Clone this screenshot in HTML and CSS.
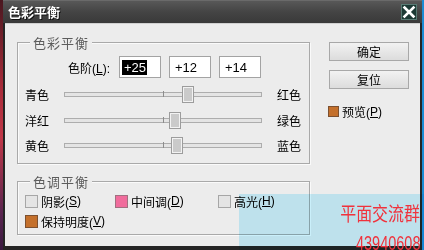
FILE: index.html
```html
<!DOCTYPE html>
<html lang="zh-CN">
<head>
<meta charset="utf-8">
<title>色彩平衡</title>
<link rel="stylesheet" href="styles.css">
</head>
<body>
<div class="window">
  <div class="titlebar">
    <span class="title">色彩平衡</span>
    <span class="close"><svg width="14" height="14" viewBox="0 0 14 14"><path d="M2.5 2.5 L11.5 11.5 M11.5 2.5 L2.5 11.5" stroke="#fff" stroke-width="2.6" stroke-linecap="square"/></svg></span>
  </div>
  <div class="client">
    <div class="left">
      <div class="group g1">
        <span class="legend">色彩平衡</span>
        <div class="levels">
          <span class="lvl-label">色阶(<u>L</u>):</span>
          <div class="field"><span class="sel">+25</span></div>
          <div class="field">+12</div>
          <div class="field">+14</div>
        </div>
        <div class="sliders">
          <div class="srow"><span class="sl">青色</span><div class="track"><i class="tick"></i><i class="thumb" style="left:117px"></i></div><span class="sr">红色</span></div>
          <div class="srow"><span class="sl">洋红</span><div class="track"><i class="tick"></i><i class="thumb" style="left:104px"></i></div><span class="sr">绿色</span></div>
          <div class="srow"><span class="sl">黄色</span><div class="track"><i class="tick"></i><i class="thumb" style="left:106px"></i></div><span class="sr">蓝色</span></div>
        </div>
      </div>
      <div class="group g2">
        <span class="legend">色调平衡</span>
        <div class="crow">
          <span class="opt w1"><i class="cb"></i>阴影(<u>S</u>)</span>
          <span class="opt w2"><i class="cb pink"></i>中间调(<u>D</u>)</span>
          <span class="opt"><i class="cb"></i>高光(<u>H</u>)</span>
        </div>
        <div class="crow">
          <span class="opt"><i class="cb orange"></i>保持明度(<u>V</u>)</span>
        </div>
      </div>
    </div>
    <div class="right">
      <div class="btn">确定</div>
      <div class="btn second">复位</div>
      <div class="preview"><i class="cb small orange"></i>预览(<u>P</u>)</div>
    </div>
  </div>
</div>
<div class="watermark">
  <span class="wm1">平面交流群</span>
  <span class="wm2">43940608</span>
</div>
</body>
</html>
```

FILE: styles.css
```css
html, body {
  margin: 0;
  padding: 0;
}
body {
  width: 424px;
  height: 250px;
  overflow: hidden;
  position: relative;
  font-family: "Liberation Sans", "Noto Sans CJK SC", sans-serif;
  font-size: 12px;
  color: #000;
  background:
    linear-gradient(#4a1820, #a82c3a 35%, #c03848 55%, #5a2550 85%, #3a1a40) left top / 3px 100% no-repeat,
    #1c8cd4;
}
.window {
  margin-left: 3px;
  width: 419px;
  height: 250px;
  background: #252525;
  display: flex;
  flex-direction: column;
}
.titlebar {
  height: 23px;
  flex: none;
  display: flex;
  align-items: center;
  justify-content: space-between;
  padding: 0 5px 0 5px;
  box-sizing: border-box;
  background: linear-gradient(#585858, #444 50%, #393939);
  border-top: 1px solid #6a6a6a;
}
.title {
  color: #fff;
  font-family: "Noto Sans CJK SC", sans-serif;
  font-weight: bold;
  font-size: 13px;
  line-height: 16px;
  text-shadow: 1px 1px 0 #111;
}
.close {
  width: 16px;
  height: 16px;
  box-sizing: border-box;
  background: #1c3934;
  border: 1px solid #587a73;
  display: flex;
  align-items: center;
  justify-content: center;
}
.client {
  flex: 1;
  margin: 0 2px 4px 2px;
  background: #ececec;
  display: flex;
  align-items: flex-start;
  padding: 18px 0 0 12px;
  box-sizing: border-box;
  border-top: 1px solid #d0d0d0;
}
.left {
  display: flex;
  flex-direction: column;
}
.group {
  position: relative;
  box-sizing: border-box;
  width: 293px;
  border: 1px solid #a9a9a9;
  box-shadow: inset 1px 1px 0 #fafafa, 1px 1px 0 #fafafa;
}
.g1 {
  height: 122px;
}
.g2 {
  height: 54px;
  margin-top: 17px;
}
.legend {
  position: absolute;
  top: -8px;
  left: 12px;
  padding: 0 3px;
  background: #ececec;
  color: #5c5c5c;
  font-family: "Noto Sans CJK SC", sans-serif;
  font-size: 13px;
  line-height: 15px;
  letter-spacing: 1px;
}
.levels {
  display: flex;
  align-items: center;
  gap: 8px;
  padding-top: 13px;
}
.lvl-label {
  width: 92px;
  margin-right: 1px;
  text-align: right;
}
.field {
  width: 42px;
  height: 22px;
  box-sizing: border-box;
  border: 1px solid #a3a3a3;
  background: #fff;
  font-size: 13px;
  padding-left: 5px;
  display: flex;
  align-items: center;
}
.sel {
  background: #000;
  color: #fff;
  line-height: 15px;
  margin-left: -3px;
  padding: 0 1px 0 2px;
}
.sliders {
  margin-top: 4px;
  padding-left: 7px;
}
.srow {
  height: 25.5px;
  display: flex;
  align-items: center;
}
.sl {
  width: 39px;
}
.track {
  position: relative;
  width: 198px;
  height: 5px;
  box-sizing: border-box;
  border: 1px solid #adadad;
  background: #e4e4e4;
}
.tick {
  position: absolute;
  left: 98px;
  top: -2px;
  width: 1px;
  height: 6px;
  background: #8c8c8c;
}
.thumb {
  position: absolute;
  top: -7px;
  width: 12px;
  height: 17px;
  box-sizing: border-box;
  background: #cacaca;
  border: 1px solid #9c9c9c;
  box-shadow: inset 1px 1px 0 #f2f2f2, inset -1px -1px 0 #f2f2f2;
}
.sr {
  margin-left: 15px;
}
.crow {
  height: 20px;
  display: flex;
  align-items: center;
  padding-left: 7px;
}
.g2 .crow:first-of-type {
  margin-top: 9px;
}
.opt {
  display: flex;
  align-items: center;
}
.w1 {
  width: 90px;
}
.w2 {
  width: 103px;
}
.cb {
  display: block;
  width: 13px;
  height: 13px;
  box-sizing: border-box;
  border: 1px solid #a6a6a6;
  background: #e4e4e4;
  margin-right: 3px;
}
.cb.pink {
  background: #f06c9c;
  border-color: #a07080;
}
.cb.orange {
  background: #c4702c;
  border-color: #7c5030;
}
.cb.small {
  width: 11px;
  height: 11px;
}
.right {
  margin-left: 18px;
  display: flex;
  flex-direction: column;
  align-items: flex-start;
}
.btn {
  width: 80px;
  height: 19px;
  box-sizing: border-box;
  border: 1px solid #a8a8a8;
  background: linear-gradient(#f2f2f2, #dcdcdc);
  display: flex;
  align-items: center;
  justify-content: center;
  margin-left: 1px;
}
.btn.second {
  margin-top: 9px;
}
.preview {
  margin-top: 14px;
  display: flex;
  align-items: center;
}
.watermark {
  position: absolute;
  left: 239px;
  top: 194px;
  width: 185px;
  height: 56px;
  display: flex;
  flex-direction: column;
  align-items: flex-end;
  padding: 9px 4px 0 0;
  box-sizing: border-box;
  color: #f0323c;
}
.watermark::before {
  content: "";
  position: absolute;
  inset: 0;
  background: #cef4ff;
  mix-blend-mode: multiply;
}
.wm1 {
  position: relative;
  font-family: "Noto Sans CJK SC", sans-serif;
  font-size: 19px;
  line-height: 19px;
  transform: scaleX(0.84);
  transform-origin: right center;
}
.wm2 {
  position: relative;
  margin-top: 10px;
  font-family: "Liberation Sans", sans-serif;
  font-size: 21px;
  line-height: 21px;
  transform: scaleX(0.69);
  transform-origin: right center;
}
```
